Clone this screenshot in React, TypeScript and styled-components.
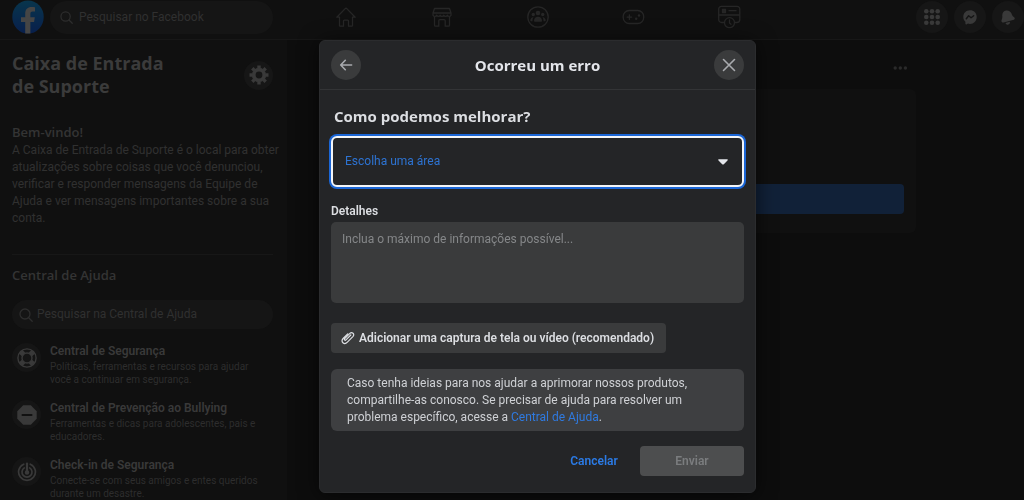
import React from "react";
import styled, { createGlobalStyle } from "styled-components";

const headingFont = `"Open Sans", "Noto Sans", "Liberation Sans", sans-serif`;

const GlobalStyle = createGlobalStyle`
  *, *::before, *::after { box-sizing: border-box; }
  body {
    margin: 0;
    background: #0d0d0d;
    color: #393939;
    font-family: Roboto, "Liberation Sans", sans-serif;
    font-size: 12px;
    line-height: 17px;
  }
  button, input, select, textarea { font: inherit; color: inherit; margin: 0; }
  h1, h2, h3, p, ul { margin: 0; padding: 0; }
  ul { list-style: none; }
  a { text-decoration: none; color: inherit; }
  svg { display: block; flex: none; }
`;

const Page = styled.div`
  height: 100vh;
  overflow: hidden;
  display: flex;
  flex-direction: column;
`;

/* Top bar */

const TopBar = styled.header`
  flex: none;
  height: 40px;
  display: grid;
  grid-template-columns: 298px 1fr auto;
  padding-bottom: 5px;
  align-items: center;
  background: #101010;
  border-bottom: 1px solid #171717;
`;

const Brand = styled.div`
  display: flex;
  align-items: center;
  gap: 6px;
  padding: 0 25px 0 12px;
`;

const SearchBox = styled.label<{ $height: number; $inset: number; $gap: number }>`
  flex: 1;
  min-width: 0;
  display: flex;
  align-items: center;
  gap: ${(p) => p.$gap}px;
  height: ${(p) => p.$height}px;
  padding: 0 ${(p) => p.$inset}px;
  border-radius: 17px;
  background: #151515;
  color: #2d2d2d;

  input {
    flex: 1;
    min-width: 0;
    padding: 0;
    border: 0;
    outline: 0;
    background: none;
  }
  input::placeholder { color: #303030; opacity: 1; }
`;

const NavTabs = styled.nav`
  display: grid;
  grid-template-columns: repeat(5, minmax(0, 96px));
  color: #262626;

  a { display: flex; justify-content: center; }
`;

const Shortcuts = styled.div`
  display: flex;
  gap: 6px;
`;

const RoundButton = styled.button<{ $size: number; $bg: string; $fg: string }>`
  flex: none;
  display: flex;
  align-items: center;
  justify-content: center;
  width: ${(p) => p.$size}px;
  height: ${(p) => p.$size}px;
  padding: 0;
  border: 0;
  border-radius: 50%;
  background: ${(p) => p.$bg};
  color: ${(p) => p.$fg};
`;

/* Sidebar */

const Columns = styled.div`
  flex: 1;
  min-height: 0;
  display: flex;
`;

const Sidebar = styled.aside`
  flex: none;
  width: 287px;
  padding: 12px 14px 0 12px;
  background: #101010;
`;

const SidebarHead = styled.div`
  display: flex;
  align-items: center;
  justify-content: space-between;

  h1 {
    max-width: 180px;
    font-family: ${headingFont};
    font-size: 18px;
    line-height: 23px;
    font-weight: 700;
    color: #3b3b3b;
  }
`;

const Welcome = styled.section`
  padding: 24px 0 27px;
  margin-bottom: 12px;
  border-bottom: 1px solid #171717;
  white-space: nowrap;
  color: #303030;

  h2 {
    font-family: ${headingFont};
    font-size: 13px;
    line-height: 20px;
    font-weight: 600;
    color: #343434;
  }
`;

const HelpTitle = styled.h2`
  font-family: ${headingFont};
  font-size: 13px;
  line-height: 17px;
  font-weight: 600;
  color: #343434;
  margin-bottom: 16px;
`;

const HelpList = styled.ul`
  margin-top: 14px;
  display: grid;
  gap: 13px;
`;

const HelpItem = styled.li`
  display: flex;
  gap: 9px;
  height: 44px;
  white-space: nowrap;

  h3 {
    font-size: 12px;
    line-height: 17px;
    font-weight: 600;
    color: #393939;
  }
  p {
    font-size: 10px;
    line-height: 13px;
    color: #2d2d2d;
  }
`;

const HelpIcon = styled.span`
  flex: none;
  width: 29px;
  height: 29px;
  border-radius: 50%;
  display: flex;
  align-items: center;
  justify-content: center;
  background: #151515;
  color: #393939;
`;

/* Main column */

const Main = styled.main`
  flex: 1;
  display: flex;
  justify-content: flex-end;
  padding: 17px 108px 0 0;
`;

const Feed = styled.div`
  width: 470px;
`;

const FeedMenu = styled.button`
  display: flex;
  margin: 0 8px 11px auto;
  padding: 0;
  border: 0;
  background: none;
  color: #2a2a2a;
  height: 21px;
  align-items: center;
`;

const Card = styled.section`
  height: 144px;
  padding: 12px;
  display: flex;
  align-items: flex-end;
  border-radius: 6px;
  background: #101010;
`;

const CardButton = styled.button`
  width: 100%;
  height: 30px;
  margin-bottom: 7px;
  border: 0;
  border-radius: 4px;
  background: #112138;
`;

/* Dialog */

const Backdrop = styled.div`
  position: fixed;
  inset: 0;
  padding: 40px 0 0 51px;
  display: flex;
  justify-content: center;
  align-items: flex-start;
`;

const Dialog = styled.form`
  width: 437px;
  border-radius: 6px;
  border: 1px solid #2b2c2e;
  background: #242527;
  color: #dcdee2;
  box-shadow: 0 2px 20px rgba(0, 0, 0, 0.6);
`;

const DialogHead = styled.div`
  height: 49px;
  padding: 0 11px;
  display: flex;
  align-items: center;
  justify-content: space-between;
  border-bottom: 1px solid #333436;

  h2 {
    font-family: ${headingFont};
    font-size: 15px;
    line-height: 20px;
    font-weight: 700;
    color: #e4e6eb;
  }
`;

const DialogBody = styled.div`
  padding: 16px 11px;
  display: flex;
  flex-direction: column;
  align-items: stretch;
`;

const Question = styled.label`
  padding-left: 3px;
  font-family: ${headingFont};
  font-size: 15px;
  line-height: 20px;
  font-weight: 700;
`;

const SelectField = styled.div`
  display: grid;
  align-items: center;
  margin: 10px 0 16px;

  select, svg { grid-area: 1 / 1; }
  select {
    appearance: none;
    width: 100%;
    height: 51px;
    padding: 0 12px;
    border: 2px solid #f4f6f8;
    border-radius: 6px;
    outline: 0;
    box-shadow: 0 0 0 2px #1b66d6;
    background: #242527;
    color: #2d73d2;
  }
  svg {
    justify-self: end;
    margin-right: 16px;
    pointer-events: none;
  }
`;

const Label = styled.label`
  font-weight: 600;
  margin-bottom: 2px;
`;

const Details = styled.textarea`
  display: block;
  height: 81px;
  padding: 9px 11px;
  border: 0;
  border-radius: 5px;
  outline: 0;
  resize: none;
  background: #3a3b3c;

  &::placeholder { color: #858789; opacity: 1; }
`;

const Attach = styled.button`
  align-self: flex-start;
  display: flex;
  align-items: center;
  gap: 4px;
  height: 30px;
  margin: 20px 0 16px;
  padding: 0 12px 0 10px;
  border: 0;
  border-radius: 4px;
  background: #3a3b3c;
  font-weight: 600;
  white-space: nowrap;
`;

const Note = styled.p`
  padding: 6px 16px 5px;
  border-radius: 6px;
  background: #3e3f41;
  color: #cfd1d5;
  white-space: nowrap;

  a { color: #2f7ae0; }
`;

const Actions = styled.div`
  display: flex;
  justify-content: flex-end;
  gap: 12px;
  margin-top: 15px;
`;

const ActionButton = styled.button<{ $primary?: boolean }>`
  height: 30px;
  min-width: ${(p) => (p.$primary ? 104 : 68)}px;
  padding: 0 8px;
  border: 0;
  border-radius: 4px;
  font-weight: 600;
  background: ${(p) => (p.$primary ? "#4d4e4f" : "transparent")};
  color: ${(p) => (p.$primary ? "#7b7d7f" : "#2b7be6")};
`;

/* Icons */

const Logo = () => (
  <svg width="32" height="34" viewBox="0 0 32 34" role="img" aria-label="Facebook">
    <defs>
      <linearGradient id="brand" x1="0" y1="0" x2="0" y2="1">
        <stop offset="0" stopColor="#08354c" />
        <stop offset="1" stopColor="#081f4c" />
      </linearGradient>
    </defs>
    <ellipse cx="16" cy="17" rx="15.7" ry="16.6" fill="url(#brand)" />
    <path
      d="M13.200 33.400V22H9v-4.700h4.200v-3.600c0-4.500 2.500-6.700 6.300-6.700 1.500 0 2.800.2 3.500.3v4.200h-2.300c-2 0-2.300 1.100-2.300 2.500v3.300h4.400l-.7 4.700h-3.700v11.400z"
      fill="#454545"
    />
  </svg>
);

const SearchIcon = ({ size }: { size: number }) => (
  <svg width={size} height={size} viewBox="0 0 14 14" fill="none" stroke="currentColor" strokeWidth="1.300" strokeLinecap="round">
    <circle cx="6" cy="6" r="5" />
    <path d="M9.700 9.700 13.200 13.200" />
  </svg>
);

const NavIcon = ({ children }: { children: React.ReactNode }) => (
  <svg width="24" height="24" viewBox="0 0 24 24" fill="none" stroke="currentColor" strokeWidth="1.300" strokeLinejoin="round" strokeLinecap="round">
    {children}
  </svg>
);

const HomeIcon = () => (
  <NavIcon>
    <path d="M2.800 12.200 11.200 3.600a1.200 1.200 0 0 1 1.600 0l8.400 8.600H18.500v8.300c0 .4-.3.700-.7.700h-3.300v-5.200c0-.5-.4-.9-.9-.9h-3.200c-.5 0-.9.4-.9.900v5.200H6.200a.7.700 0 0 1-.7-.7v-8.300z" />
  </NavIcon>
);

const StoreIcon = () => (
  <NavIcon>
    <path d="M4.500 3.500h15L21 8v2.200c-.8 1.600-3 1.600-3.700 0-.7 1.600-2.800 1.600-3.500 0-.7 1.600-2.900 1.600-3.600 0-.7 1.600-2.800 1.600-3.500 0-.7 1.600-2.900 1.600-3.700 0V8zM3 8h18" />
    <path d="M4.500 12v8.200c0 .6.4 1 1 1h3.300v-5.500c0-.6.4-1 1-1h4.400c.6 0 1 .4 1 1v5.500h3.300c.6 0 1-.4 1-1V12" />
  </NavIcon>
);

const GroupsIcon = () => (
  <NavIcon>
    <circle cx="12" cy="12" r="10.200" />
    <g fill="currentColor" stroke="none">
      <circle cx="12" cy="8" r="2.300" />
      <circle cx="7.300" cy="9.500" r="1.700" />
      <circle cx="16.700" cy="9.500" r="1.700" />
      <path d="M8 15.800c0-2.500 1.800-4 4-4s4 1.500 4 4c0 .7-.5 1-1 1H9c-.5 0-1-.3-1-1zM7.500 12.200c-2 0-3.200 1.300-3.200 3.300 0 .6.400.8.900.8h1.300c-.1-1.600.2-2.900 1-4.100zM16.500 12.200c2 0 3.200 1.300 3.200 3.300 0 .6-.4.8-.9.8h-1.300c.1-1.600-.2-2.900-1-4.100z" />
    </g>
  </NavIcon>
);

const GamingIcon = () => (
  <NavIcon>
    <rect x="1.200" y="5.500" width="20.500" height="13" rx="6" />
    <path d="M7.400 9.800v4.600M5.100 12.100h4.600" />
    <g fill="currentColor" stroke="none">
      <circle cx="17" cy="10.500" r="1.200" />
      <circle cx="14.200" cy="13.800" r="1.200" />
    </g>
  </NavIcon>
);

const RecentIcon = () => (
  <NavIcon>
    <path d="M6.500 17.500H3.700a3 3 0 0 1-3-3V4a2.700 2.700 0 0 1 2.700-2.700h15.700A2.700 2.700 0 0 1 21.800 4v10.500a3 3 0 0 1-3 3h-2.300M.7 10h21M11 5.700h7" />
    <rect x="4.500" y="4.500" width="3" height="3" fill="currentColor" />
    <circle cx="11.500" cy="17.700" r="5" />
    <path d="M11.500 15v3l1.500 1.200" />
  </NavIcon>
);

const MenuIcon = () => (
  <svg width="16" height="16" viewBox="0 0 16 16" fill="currentColor">
    {[2.3, 8, 13.7].map((y) => [2.3, 8, 13.7].map((x) => <circle key={`${x}-${y}`} cx={x} cy={y} r="2.300" />))}
  </svg>
);

const MessengerIcon = () => (
  <svg width="14" height="15" viewBox="0 0 14 15">
    <path d="M7 .3C3.200.3.300 3.100.300 6.900c0 2 .8 3.600 2.100 4.800v2c0 .6.500.9 1 .7l1.600-.8c.6.200 1.300.3 2 .3 3.800 0 6.700-2.900 6.700-6.900S10.800.3 7 .3z" fill="currentColor" />
    <path d="m3.300 8.700 2.300-3 2.500 2 2.600-2" fill="none" stroke="#151515" strokeWidth="1.400" strokeLinejoin="round" strokeLinecap="round" />
  </svg>
);

const BellIcon = () => (
  <svg width="14" height="15" viewBox="0 0 14 15" fill="currentColor">
    <path d="M1.300 6.200C1 3 2.600.9 5.100.5s4.700.9 5.500 3.200c.6 1.800 1.100 2.400 2.500 3.500 1 .8.800 2-.2 2.500l-10.300 2.800c-1.400.3-2.500-.7-2.100-2C.9 8.900 1.400 8 1.300 6.200zM4.500 12.900l4.300-1.200c.4 1.300-.2 2.600-1.500 2.900-1.200.3-2.400-.4-2.800-1.700z" />
  </svg>
);

const GearIcon = () => (
  <svg width="20" height="20" viewBox="0 0 20 20" fill="none" stroke="currentColor">
    <circle cx="10" cy="10" r="5.300" strokeWidth="3.800" />
    {[0, 45, 90, 135].map((a) => (
      <path key={a} d="M10 .5V3.500M10 16.500V19.500" strokeWidth="3.400" transform={`rotate(${a} 10 10)`} />
    ))}
  </svg>
);

const LifebuoyIcon = () => (
  <svg width="20" height="20" viewBox="0 0 20 20" fill="none" stroke="currentColor">
    <circle cx="10" cy="10" r="9.100" strokeWidth="1.400" />
    <circle cx="10" cy="10" r="5" strokeWidth="1.400" />
    {[45, 135, 225, 315].map((a) => (
      <path key={a} d="M10 1v4.200" strokeWidth="5" transform={`rotate(${a} 10 10)`} />
    ))}
  </svg>
);

const StopIcon = () => (
  <svg width="20" height="20" viewBox="0 0 20 20">
    <path d="M6.200.3h7.600l5.900 5.900v7.600l-5.900 5.900H6.200L.3 13.800V6.200z" fill="currentColor" />
    <path d="M5.500 10h9" stroke="#111" strokeWidth="2" strokeLinecap="round" />
  </svg>
);

const CheckinIcon = () => (
  <svg width="20" height="20" viewBox="0 0 20 20" fill="none" stroke="currentColor" strokeWidth="1.700" strokeLinecap="round">
    <path d="M6.700 2.200a8.400 8.400 0 1 0 6.600 0" />
    <path d="M7.300 5.900a5 5 0 1 0 5.400 0" />
    <path d="M10 1.500v8.500" strokeWidth="2.200" />
    <circle cx="10" cy="10.500" r="1.400" fill="currentColor" />
  </svg>
);

const DotsIcon = () => (
  <svg width="15" height="4" viewBox="0 0 15 4" fill="currentColor">
    <circle cx="2.200" cy="2" r="1.700" />
    <circle cx="7.300" cy="2" r="1.700" />
    <circle cx="12.400" cy="2" r="1.700" />
  </svg>
);

const BackIcon = () => (
  <svg width="14" height="14" viewBox="0 0 14 14" fill="none" stroke="currentColor" strokeWidth="1.600" strokeLinecap="round" strokeLinejoin="round">
    <path d="M12.600 7H1.700M6.300 2.300 1.700 7l4.600 4.700" />
  </svg>
);

const CloseIcon = () => (
  <svg width="14" height="14" viewBox="0 0 14 14" fill="none" stroke="currentColor" strokeWidth="1.600" strokeLinecap="round">
    <path d="m1.500 1.500 11 11M12.500 1.500l-11 11" />
  </svg>
);

const CaretIcon = () => (
  <svg width="10" height="6" viewBox="0 0 10 6" fill="#e4e6eb">
    <path d="M1 .3h8c.8 0 1 .7.500 1.200L5.800 5.200c-.5.500-1.100.5-1.600 0L.5 1.500C0 1 .2.300 1 .3z" />
  </svg>
);

const ClipIcon = () => (
  <svg width="14" height="14" viewBox="0 0 14 14" fill="none" stroke="currentColor" strokeWidth="1.200" strokeLinecap="round" strokeLinejoin="round">
    <path d="M9.800 4 5 8.900c-.9.900-2.200-.3-1.300-1.300l5.200-5.300c2-2 5.200.8 3.200 3L6.400 11.200c-3.200 3.200-7.300-.5-4.300-3.700l4.600-4.700" />
  </svg>
);

const navItems = [
  { label: "Página inicial", Icon: HomeIcon },
  { label: "Marketplace", Icon: StoreIcon },
  { label: "Grupos", Icon: GroupsIcon },
  { label: "Jogos", Icon: GamingIcon },
  { label: "Mais recentes", Icon: RecentIcon },
];

const shortcuts = [
  { label: "Menu", Icon: MenuIcon },
  { label: "Messenger", Icon: MessengerIcon },
  { label: "Notificações", Icon: BellIcon },
];

const helpItems = [
  { title: "Central de Segurança", lines: ["Políticas, ferramentas e recursos para ajudar", "você a continuar em segurança."], Icon: LifebuoyIcon },
  { title: "Central de Prevenção ao Bullying", lines: ["Ferramentas e dicas para adolescentes, pais e", "educadores."], Icon: StopIcon },
  { title: "Check-in de Segurança", lines: ["Conecte-se com seus amigos e entes queridos", "durante um desastre."], Icon: CheckinIcon },
];

export default function App() {
  return (
    <Page>
      <GlobalStyle />
      <TopBar>
        <Brand>
          <Logo />
          <SearchBox $height={33} $inset={10} $gap={6}>
            <SearchIcon size={13} />
            <input type="search" aria-label="Pesquisar no Facebook" placeholder="Pesquisar no Facebook" />
          </SearchBox>
        </Brand>
        <NavTabs>
          {navItems.map(({ label, Icon }) => (
            <a key={label} href="#" aria-label={label}>
              <Icon />
            </a>
          ))}
        </NavTabs>
        <Shortcuts>
          {shortcuts.map(({ label, Icon }) => (
            <RoundButton key={label} type="button" aria-label={label} $size={32} $bg="#161616" $fg="#393939">
              <Icon />
            </RoundButton>
          ))}
        </Shortcuts>
      </TopBar>

      <Columns>
        <Sidebar>
          <SidebarHead>
            <h1>
              Caixa de Entrada
              <br />
              de Suporte
            </h1>
            <RoundButton type="button" aria-label="Configurações" $size={29} $bg="#161616" $fg="#393939">
              <GearIcon />
            </RoundButton>
          </SidebarHead>
          <Welcome>
            <h2>Bem-vindo!</h2>
            <p>
              A Caixa de Entrada de Suporte é o local para obter
              <br />
              atualizações sobre coisas que você denunciou,
              <br />
              verificar e responder mensagens da Equipe de
              <br />
              Ajuda e ver mensagens importantes sobre a sua
              <br />
              conta.
            </p>
          </Welcome>
          <HelpTitle>Central de Ajuda</HelpTitle>
          <SearchBox $height={29} $inset={7} $gap={4}>
            <SearchIcon size={14} />
            <input type="search" aria-label="Pesquisar na Central de Ajuda" placeholder="Pesquisar na Central de Ajuda" />
          </SearchBox>
          <HelpList>
            {helpItems.map(({ title, lines, Icon }) => (
              <HelpItem key={title}>
                <HelpIcon>
                  <Icon />
                </HelpIcon>
                <div>
                  <h3>{title}</h3>
                  <p>
                    {lines[0]}
                    <br />
                    {lines[1]}
                  </p>
                </div>
              </HelpItem>
            ))}
          </HelpList>
        </Sidebar>
        <Main>
          <Feed>
            <FeedMenu type="button" aria-label="Mais opções">
              <DotsIcon />
            </FeedMenu>
            <Card>
              <CardButton type="button" aria-label="Abrir" />
            </Card>
          </Feed>
        </Main>
      </Columns>

      <Backdrop>
        <Dialog role="dialog" aria-labelledby="dialog-title">
          <DialogHead>
            <RoundButton type="button" aria-label="Voltar" $size={30} $bg="#3a3b3c" $fg="#a9abaf">
              <BackIcon />
            </RoundButton>
            <h2 id="dialog-title">Ocorreu um erro</h2>
            <RoundButton type="button" aria-label="Fechar" $size={30} $bg="#3a3b3c" $fg="#a9abaf">
              <CloseIcon />
            </RoundButton>
          </DialogHead>
          <DialogBody>
            <Question htmlFor="area">Como podemos melhorar?</Question>
            <SelectField>
              <select id="area">
                <option>Escolha uma área</option>
              </select>
              <CaretIcon />
            </SelectField>
            <Label htmlFor="details">Detalhes</Label>
            <Details id="details" placeholder="Inclua o máximo de informações possível..." />
            <Attach type="button">
              <ClipIcon />
              Adicionar uma captura de tela ou vídeo (recomendado)
            </Attach>
            <Note>
              Caso tenha ideias para nos ajudar a aprimorar nossos produtos,
              <br />
              compartilhe-as conosco. Se precisar de ajuda para resolver um
              <br />
              problema específico, acesse a <a href="#">Central de Ajuda</a>.
            </Note>
            <Actions>
              <ActionButton type="button">Cancelar</ActionButton>
              <ActionButton type="submit" $primary disabled>
                Enviar
              </ActionButton>
            </Actions>
          </DialogBody>
        </Dialog>
      </Backdrop>
    </Page>
  );
}
